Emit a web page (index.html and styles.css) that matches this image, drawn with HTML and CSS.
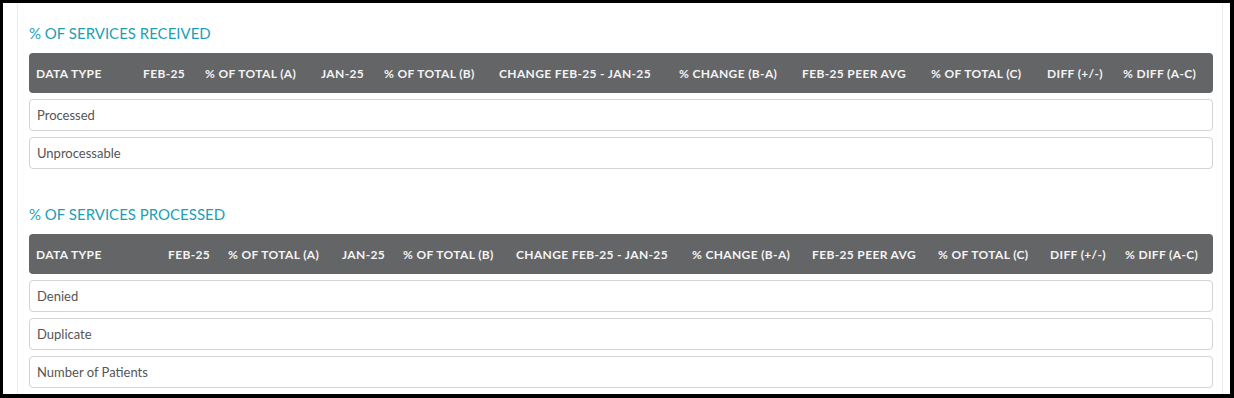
FILE: index.html
```html
<!DOCTYPE html>
<html>
<head>
<meta charset="utf-8">
<link rel="stylesheet" href="styles.css">
</head>
<body>
<div class="screen">
  <div class="panel">
    <section class="block">
      <h2 class="title">% OF SERVICES RECEIVED</h2>
      <div class="thead cols-a">
        <span>DATA TYPE</span><span>FEB-25</span><span>% OF TOTAL (A)</span><span>JAN-25</span><span>% OF TOTAL (B)</span><span>CHANGE FEB-25 - JAN-25</span><span>% CHANGE (B-A)</span><span>FEB-25 PEER AVG</span><span>% OF TOTAL (C)</span><span>DIFF (+/-)</span><span>% DIFF (A-C)</span>
      </div>
      <div class="row">Processed</div>
      <div class="row">Unprocessable</div>
    </section>
    <section class="block second">
      <h2 class="title">% OF SERVICES PROCESSED</h2>
      <div class="thead cols-b">
        <span>DATA TYPE</span><span>FEB-25</span><span>% OF TOTAL (A)</span><span>JAN-25</span><span>% OF TOTAL (B)</span><span>CHANGE FEB-25 - JAN-25</span><span>% CHANGE (B-A)</span><span>FEB-25 PEER AVG</span><span>% OF TOTAL (C)</span><span>DIFF (+/-)</span><span>% DIFF (A-C)</span>
      </div>
      <div class="row">Denied</div>
      <div class="row">Duplicate</div>
      <div class="row">Number of Patients</div>
    </section>
  </div>
</div>
</body>
</html>
```
FILE: styles.css
```css
html, body {
  margin: 0;
  padding: 0;
  background: #000;
}
body {
  padding: 3px 4px 4px 3px;
  height: 398px;
  box-sizing: border-box;
  overflow: hidden;
  font-family: Lato, "Open Sans", sans-serif;
}
.screen {
  background: #fff;
  height: 391px;
  overflow: hidden;
  padding-left: 14px;
  padding-right: 7px;
}
.panel {
  border-left: 1px solid #ececec;
  border-right: 1px solid #ececec;
  height: 100%;
  padding: 0 9px 0 11px;
}
.block {
  padding-top: 20px;
}
.block.second {
  padding-top: 29px;
}
.title {
  margin: 0 0 10px 0;
  font-size: 15px;
  line-height: 20px;
  font-weight: 400;
  color: #1d9fb3;
}
.thead {
  display: grid;
  align-items: center;
  height: 40px;
  box-sizing: border-box;
  background: #646567;
  border-radius: 4px;
  padding-left: 7px;
  color: #f4f4f4;
  font-size: 12px;
  font-weight: 700;
  letter-spacing: 0.35px;
  white-space: nowrap;
  margin-bottom: 6px;
}
.cols-a {
  grid-template-columns: 107px 62px 116px 63px 115px 180px 123px 129px 116px 76px 1fr;
}
.cols-b {
  grid-template-columns: 132px 60px 114px 61px 113px 176px 120px 126px 112px 75px 1fr;
}
.row {
  height: 32px;
  box-sizing: border-box;
  border: 1px solid #d4d4d4;
  border-radius: 4px;
  padding-left: 7px;
  display: flex;
  align-items: center;
  font-size: 13px;
  color: #555;
  margin-bottom: 6px;
}
```
